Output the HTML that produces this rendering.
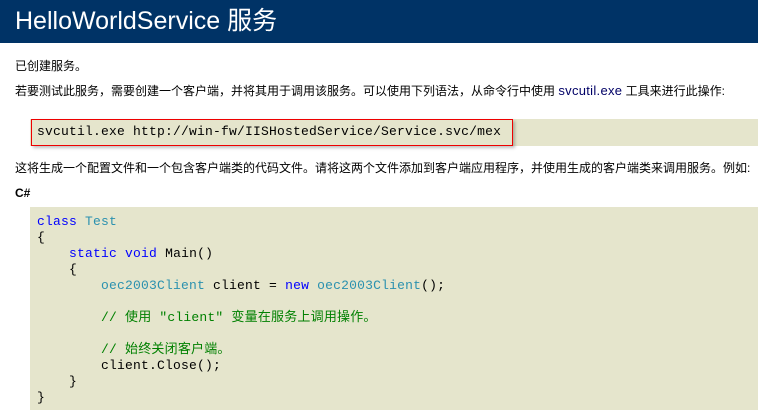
<!DOCTYPE html>
<html><head><meta charset="utf-8"><style>
body{margin:0;width:758px;height:410px;overflow:hidden;background:#fff;font-family:"Liberation Sans","Noto Sans CJK SC",sans-serif;font-size:12px;color:#000;position:relative}
.hd{position:absolute;left:0;top:0;width:758px;height:43px;background:#003366;color:#fff;font-size:25px;line-height:43px;padding-left:15px;box-sizing:border-box;white-space:nowrap}
.t{position:absolute;left:15px;white-space:nowrap;line-height:16px}
.cmd{position:absolute;left:30px;top:119px;width:728px;height:27px;background:#e5e5cc}
.red{position:absolute;left:31px;top:119px;width:480px;height:25px;border:1px solid #e00;box-shadow:2px 2px 3px rgba(0,0,0,.25)}
.mono{font-family:"Liberation Mono",monospace;font-size:13px;letter-spacing:.2px}
.code{position:absolute;left:30px;top:207px;width:728px;height:203px;background:#e5e5cc}
.code pre{margin:0;position:absolute;left:7px;top:7px;line-height:16px;font-family:"Liberation Mono","Noto Sans CJK SC",monospace;font-size:13px;letter-spacing:.2px}
.k{color:#0000ff}.ty{color:#2b91af}.c{color:#008000}
</style></head><body>
<div class="hd">HelloWorldService 服务</div>
<div class="t" style="top:58px">已创建服务。</div>
<div class="t" style="top:83px">若要测试此服务，需要创建一个客户端，并将其用于调用该服务。可以使用下列语法，从命令行中使用 <span style="color:#000066;font-size:13px;letter-spacing:.3px">svcutil.exe</span> 工具来进行此操作:</div>
<div class="cmd"></div>
<div class="red"></div>
<div class="t mono" style="left:37px;top:124px">svcutil.exe http://win-fw/IISHostedService/Service.svc/mex</div>
<div class="t" style="top:160px">这将生成一个配置文件和一个包含客户端类的代码文件。请将这两个文件添加到客户端应用程序，并使用生成的客户端类来调用服务。例如:</div>
<div class="t" style="top:185px;font-weight:bold">C#</div>
<div class="code"><pre><span class="k">class</span> <span class="ty">Test</span>
{
    <span class="k">static</span> <span class="k">void</span> Main()
    {
        <span class="ty">oec2003Client</span> client = <span class="k">new</span> <span class="ty">oec2003Client</span>();

        <span class="c">// 使用 "client" 变量在服务上调用操作。</span>

        <span class="c">// 始终关闭客户端。</span>
        client.Close();
    }
}</pre></div>
</body></html>
